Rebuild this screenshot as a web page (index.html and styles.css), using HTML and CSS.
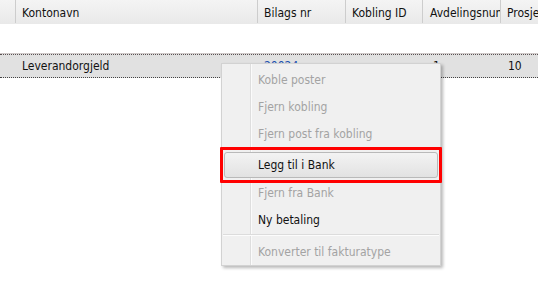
FILE: index.html
```html
<!DOCTYPE html>
<html lang="no">
<head>
<meta charset="utf-8">
<title>Grid</title>
<link rel="stylesheet" href="styles.css">
</head>
<body>
<div class="grid">
  <div class="header">
    <div class="cell c0"></div>
    <div class="cell c1">Kontonavn</div>
    <div class="cell c2">Bilags nr</div>
    <div class="cell c3">Kobling ID</div>
    <div class="cell c4">Avdelingsnummer</div>
    <div class="cell c5">Prosjekt</div>
  </div>
  <div class="gap"></div>
  <div class="row">
    <div class="cell c0"></div>
    <div class="cell c1">Leverandorgjeld</div>
    <div class="cell c2 link">20024</div>
    <div class="cell c3"></div>
    <div class="cell c4 num">1</div>
    <div class="cell c5">10</div>
  </div>
</div>
<ul class="menu">
  <li class="item off">Koble poster</li>
  <li class="item off">Fjern kobling</li>
  <li class="item off">Fjern post fra kobling</li>
  <li class="sep s1"></li>
  <li class="item hl">Legg til i Bank</li>
  <li class="item off">Fjern fra Bank</li>
  <li class="item">Ny betaling</li>
  <li class="sep s2"></li>
  <li class="item off">Konverter til fakturatype</li>
</ul>
</body>
</html>
```
FILE: styles.css
```css
html, body {
  margin: 0;
  padding: 0;
  background: #fff;
}
body {
  width: 538px;
  height: 300px;
  overflow: hidden;
  position: relative;
  font-family: "DejaVu Sans Condensed", "DejaVu Sans", Tahoma, sans-serif;
  font-stretch: condensed;
  font-size: 12px;
  color: #111;
}
.grid {
  width: 538px;
  overflow: hidden;
}
.header, .row {
  display: flex;
  white-space: nowrap;
}
.header {
  height: 24px;
  background: linear-gradient(#f4f4f4, #e9e9e9);
}
.cell {
  flex: none;
  overflow: hidden;
  box-sizing: border-box;
  padding-left: 6px;
  line-height: 24px;
  border-right: 1px solid #cdcdcd;
}
.header .cell {
  height: 23px;
  line-height: 26px;
}
.c0 { width: 16px; padding: 0; }
.c1 { width: 242px; }
.c2 { width: 88px; }
.c3 { width: 77px; }
.c4 { width: 78px; padding-left: 7px; }
.c5 { width: 37px; border-right: none; }
.gap { height: 30px; }
.row {
  height: 24px;
  box-sizing: border-box;
  background: #e1e1e1;
  border-top: 1px dotted #5a5252;
  border-bottom: 1px dotted #444;
  box-shadow: 0 -1px 0 #cfc9c9;
}
.row .cell {
  border-right-color: transparent;
  line-height: 23px;
  height: 22px;
}
.row .c5 { padding-left: 7px; }
.link { color: #1a4fb0; }
.num { padding-left: 10px !important; }

.menu {
  position: absolute;
  left: 221px;
  top: 63px;
  width: 220px;
  box-sizing: border-box;
  margin: 0;
  padding: 2px 0 0;
  list-style: none;
  border: 1px solid #d2d2d2;
  background:
    linear-gradient(to right, transparent 28px, #dedede 28px, #dedede 29px, #fbfbfb 29px, #fbfbfb 30px, transparent 30px),
    #f0f0f0;
  box-shadow: 2px 2px 3px rgba(0, 0, 0, 0.28);
  color: #111;
}
.item {
  height: 27px;
  line-height: 28px;
  padding-left: 36px;
  white-space: nowrap;
}
.off { color: #a3a3a3; }
.sep {
  margin: 0 1px;
  box-sizing: border-box;
}
.s1 {
  height: 4px;
  padding-top: 1px;
}
.s2 {
  height: 5px;
  padding-top: 1px;
}
.sep::before {
  content: "";
  display: block;
  height: 1px;
  background: #dcdcdc;
  border-bottom: 1px solid #fcfcfc;
}
.hl {
  position: relative;
  margin: 1px 2px 1px;
  height: 26px;
  line-height: 25px;
  box-sizing: border-box;
  padding-left: 33px;
  border: 1px solid #b9b9b9;
  border-radius: 3px;
  background: linear-gradient(#f3f3f3, #e2e2e2);
}
.hl::after {
  content: "";
  position: absolute;
  left: -5px;
  right: -5px;
  top: -6px;
  bottom: -6px;
  border: 3px solid #ff0000;
  border-radius: 1px;
}
```
